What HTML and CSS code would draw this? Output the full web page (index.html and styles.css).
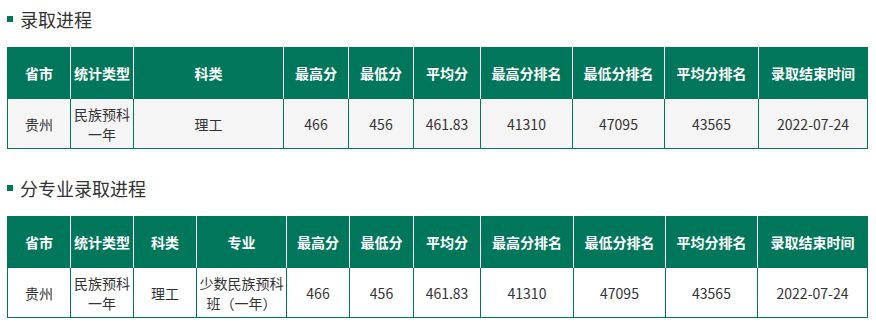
FILE: index.html
```html
<!DOCTYPE html>
<html lang="zh-CN">
<head>
<meta charset="utf-8">
<title>录取进程</title>
<link rel="stylesheet" href="styles.css">
</head>
<body>
<div class="page">
  <h2 class="title"><span class="bullet"></span>录取进程</h2>
  <table class="grid grid-gray">
    <colgroup>
      <col class="w63"><col class="w63"><col class="w150"><col class="w65"><col class="w65"><col class="w67"><col class="w92"><col class="w92"><col class="w94"><col class="w109">
    </colgroup>
    <thead>
      <tr><th>省市</th><th>统计类型</th><th>科类</th><th>最高分</th><th>最低分</th><th>平均分</th><th>最高分排名</th><th>最低分排名</th><th>平均分排名</th><th>录取结束时间</th></tr>
    </thead>
    <tbody>
      <tr><td>贵州</td><td>民族预科一年</td><td>理工</td><td>466</td><td>456</td><td>461.83</td><td>41310</td><td>47095</td><td>43565</td><td>2022-07-24</td></tr>
    </tbody>
  </table>

  <h2 class="title title-second"><span class="bullet"></span>分专业录取进程</h2>
  <table class="grid">
    <colgroup>
      <col class="w63"><col class="w63"><col class="w63"><col class="w90"><col class="w63"><col class="w64"><col class="w67"><col class="w93"><col class="w92"><col class="w92"><col class="w110">
    </colgroup>
    <thead>
      <tr><th>省市</th><th>统计类型</th><th>科类</th><th>专业</th><th>最高分</th><th>最低分</th><th>平均分</th><th>最高分排名</th><th>最低分排名</th><th>平均分排名</th><th>录取结束时间</th></tr>
    </thead>
    <tbody>
      <tr><td>贵州</td><td>民族预科一年</td><td>理工</td><td>少数民族预科班（一年）</td><td>466</td><td>456</td><td>461.83</td><td>41310</td><td>47095</td><td>43565</td><td>2022-07-24</td></tr>
    </tbody>
  </table>
</div>
</body>
</html>
```

FILE: styles.css
```css
html, body {
  margin: 0;
  padding: 0;
  background: #ffffff;
}
.page {
  padding: 0 7px;
  font-family: "Noto Sans CJK SC", "Microsoft YaHei", "Noto Sans", sans-serif;
  color: #333333;
}
.title {
  display: flex;
  align-items: center;
  height: 38px;
  margin: 0 0 9px 0;
  font-size: 18px;
  font-weight: normal;
  color: #333333;
}
.title-second {
  margin-top: 20px;
}
.bullet {
  width: 6px;
  height: 6px;
  background: #00775a;
  margin-right: 7px;
}
.grid {
  width: 860px;
  table-layout: fixed;
  border-collapse: collapse;
  border: 1px solid #00775a;
  font-size: 14px;
}
.grid th {
  height: 50px;
  padding: 0 2px;
  background: #00775a;
  color: #ffffff;
  font-weight: bold;
  border-left: 1px solid #ffffff;
  border-right: 1px solid #ffffff;
  text-align: center;
}
.grid th:first-child {
  border-left: 1px solid #00775a;
}
.grid th:last-child {
  border-right: 1px solid #00775a;
}
.grid td {
  height: 49px;
  padding: 0 1px;
  border: 1px solid #00775a;
  text-align: center;
  line-height: 20px;
  background: #ffffff;
}
.grid-gray td {
  background: #f5f5f5;
}
.w63 { width: 63px; }
.w64 { width: 64px; }
.w65 { width: 65px; }
.w67 { width: 67px; }
.w90 { width: 90px; }
.w92 { width: 92px; }
.w93 { width: 93px; }
.w94 { width: 94px; }
.w109 { width: 109px; }
.w110 { width: 110px; }
.w150 { width: 150px; }
```
